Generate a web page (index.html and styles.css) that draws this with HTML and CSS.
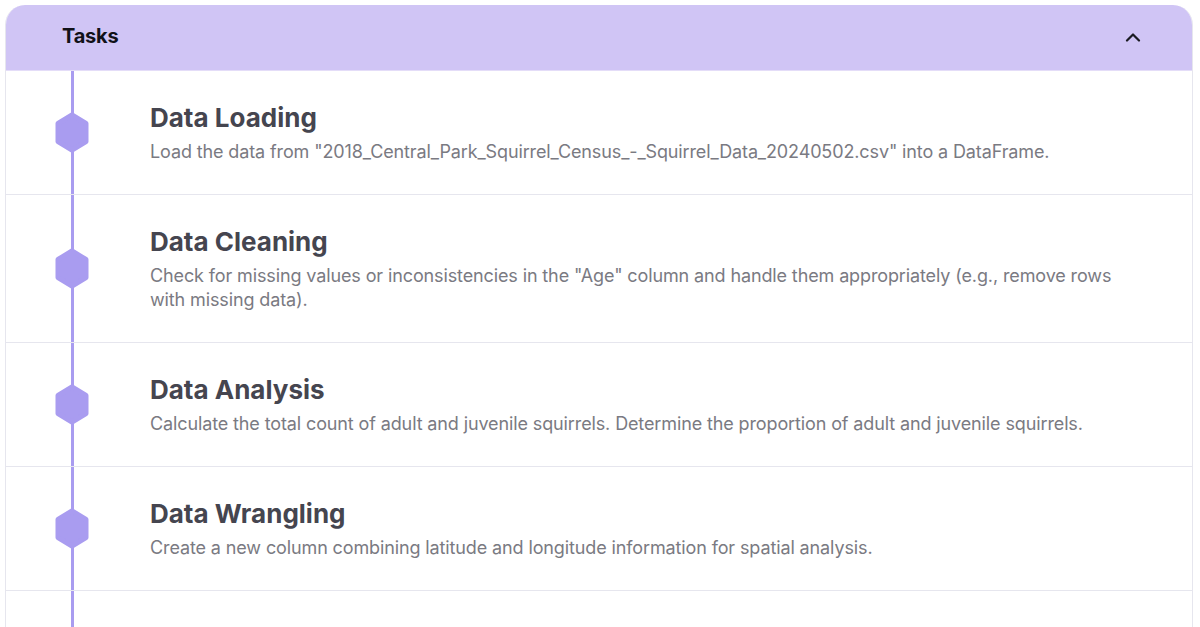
FILE: index.html
```html
<!DOCTYPE html>
<html lang="en">
<head>
<meta charset="utf-8">
<title>Tasks</title>
<link rel="stylesheet" href="styles.css">
</head>
<body>
<section class="card">
  <header class="card-head">
    <h2 class="card-title">Tasks</h2>
    <svg class="chevron" width="16" height="10" viewBox="0 0 16 10" aria-hidden="true"><path d="M2 8.5 L8 2.5 L14 8.5" fill="none" stroke="#1a1a22" stroke-width="2.2" stroke-linecap="round" stroke-linejoin="round"/></svg>
  </header>
  <ol class="tasks">
    <li class="task">
      <div class="rail"><svg class="hex" width="36" height="42" viewBox="0 0 36 42"><path d="M18 3 L32 11.5 L32 29.5 L18 38 L4 29.5 L4 11.5 Z" fill="#a99cf0" stroke="#a99cf0" stroke-width="5" stroke-linejoin="round"/></svg></div>
      <div class="task-body">
        <h3 class="task-title">Data Loading</h3>
        <p class="task-desc">Load the data from "2018_Central_Park_Squirrel_Census_-_Squirrel_Data_20240502.csv" into a DataFrame.</p>
      </div>
    </li>
    <li class="task">
      <div class="rail"><svg class="hex" width="36" height="42" viewBox="0 0 36 42"><path d="M18 3 L32 11.5 L32 29.5 L18 38 L4 29.5 L4 11.5 Z" fill="#a99cf0" stroke="#a99cf0" stroke-width="5" stroke-linejoin="round"/></svg></div>
      <div class="task-body">
        <h3 class="task-title">Data Cleaning</h3>
        <p class="task-desc">Check for missing values or inconsistencies in the "Age" column and handle them appropriately (e.g., remove rows with missing data).</p>
      </div>
    </li>
    <li class="task">
      <div class="rail"><svg class="hex" width="36" height="42" viewBox="0 0 36 42"><path d="M18 3 L32 11.5 L32 29.5 L18 38 L4 29.5 L4 11.5 Z" fill="#a99cf0" stroke="#a99cf0" stroke-width="5" stroke-linejoin="round"/></svg></div>
      <div class="task-body">
        <h3 class="task-title">Data Analysis</h3>
        <p class="task-desc">Calculate the total count of adult and juvenile squirrels. Determine the proportion of adult and juvenile squirrels.</p>
      </div>
    </li>
    <li class="task">
      <div class="rail"><svg class="hex" width="36" height="42" viewBox="0 0 36 42"><path d="M18 3 L32 11.5 L32 29.5 L18 38 L4 29.5 L4 11.5 Z" fill="#a99cf0" stroke="#a99cf0" stroke-width="5" stroke-linejoin="round"/></svg></div>
      <div class="task-body">
        <h3 class="task-title">Data Wrangling</h3>
        <p class="task-desc">Create a new column combining latitude and longitude information for spatial analysis.</p>
      </div>
    </li>
    <li class="task task-next">
      <div class="rail"></div>
      <div class="task-body"></div>
    </li>
  </ol>
</section>
</body>
</html>
```
FILE: styles.css
```css
html, body {
  margin: 0;
  padding: 0;
  background: #ffffff;
  overflow: hidden;
}
body {
  padding: 5px 7px 0 5px;
  font-family: Inter, "Open Sans", "Liberation Sans", sans-serif;
}
.card {
  border: 1px solid #e6e6ee;
  border-top: none;
  border-radius: 20px 20px 0 0;
  overflow: hidden;
}
.card-head {
  height: 66px;
  box-sizing: border-box;
  background: #d0c5f5;
  display: flex;
  align-items: center;
  justify-content: space-between;
  padding: 0 51px 4px 56px;
  border-bottom: 1px solid #e4ddf8;
}
.card-title {
  margin: 0;
  font-size: 20px;
  font-weight: 700;
  letter-spacing: -0.2px;
  color: #111118;
}
.chevron { display: block; margin-top: 2px; }
.tasks {
  list-style: none;
  margin: 0;
  padding: 0;
}
.task {
  display: flex;
  align-items: stretch;
  border-bottom: 1px solid #e6e6ee;
}
.task-next {
  min-height: 80px;
  border-bottom: none;
}
.rail {
  flex: 0 0 132px;
  display: flex;
  align-items: center;
  justify-content: center;
  background: linear-gradient(#a99cf0, #a99cf0) no-repeat center / 3px 100%;
}
.hex { display: block; }
.task-body {
  padding: 30px 76px 30px 12px;
}
.task-title {
  margin: 0;
  font-size: 26px;
  line-height: 34px;
  font-weight: 700;
  color: #45454f;
}
.task-desc {
  margin: 5px 0 0;
  font-size: 18px;
  line-height: 24px;
  letter-spacing: -0.12px;
  color: #7a7a82;
}
```
